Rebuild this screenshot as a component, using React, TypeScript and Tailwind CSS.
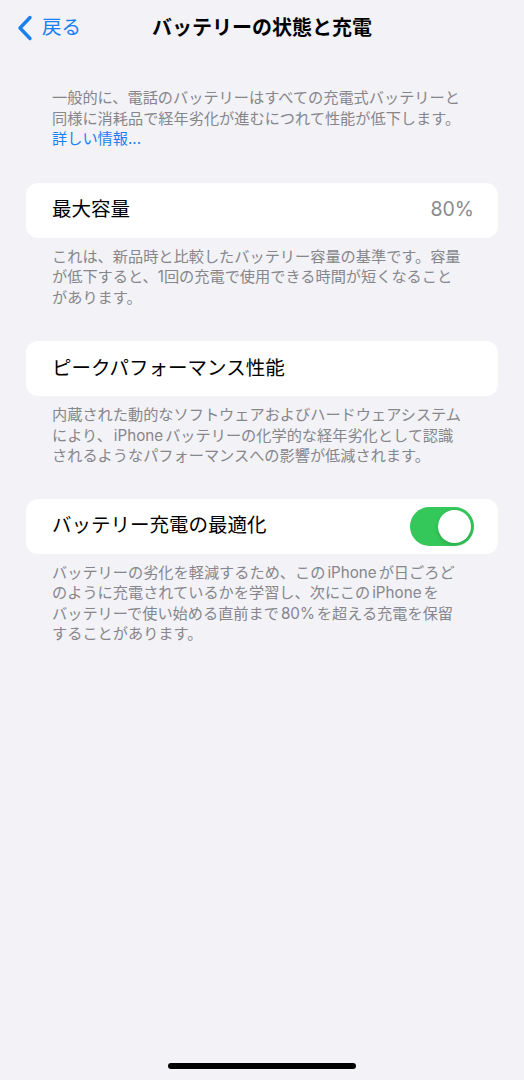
import React from 'react';

const font = { fontFamily: 'Inter, "Noto Sans CJK JP", "Noto Sans", sans-serif' };

function Footer({ children }: { children: React.ReactNode }) {
  return (
    <p className="mt-[9px] px-[26px] text-[15.2px] leading-[20.5px] text-[#86868b] whitespace-nowrap">
      {children}
    </p>
  );
}

function Card({ children }: { children: React.ReactNode }) {
  return (
    <div className="flex h-[55px] items-center justify-between rounded-[12px] bg-white pl-[26px] pr-[24px]">
      {children}
    </div>
  );
}

function Toggle() {
  return (
    <div className="flex h-[39px] w-[64px] items-center justify-end rounded-full bg-[#34c759] p-[3px]">
      <div className="h-[33px] w-[33px] rounded-full bg-white shadow-[0_2px_4px_rgba(0,0,0,0.15)]" />
    </div>
  );
}

// 和文の中の英数字には少しだけ間をあける
function L({ children }: { children: React.ReactNode }) {
  return <span className="mx-[2px]">{children}</span>;
}

export default function App() {
  return (
    <div className="flex min-h-[1080px] flex-col bg-[#f2f2f7] text-black" style={font}>
      <div className="grid h-[56px] grid-cols-[1fr_auto_1fr] items-center">
        <div className="flex items-center pl-[17px] text-[#1a7ff2]">
          <svg width="16" height="26" viewBox="0 0 16 26" fill="none">
            <path d="M13 2.5L3 13l10 10.5" stroke="currentColor" strokeWidth="3.4" strokeLinecap="round" strokeLinejoin="round" />
          </svg>
          <span className="ml-[9px] text-[19.5px]">戻る</span>
        </div>
        <h1 className="text-[20px] font-bold">バッテリーの状態と充電</h1>
        <div />
      </div>

      <div className="mx-[26px]">
        <p className="mt-[32px] px-[26px] text-[15.2px] leading-[20.5px] text-[#86868b] whitespace-nowrap">
          一般的に、電話のバッテリーはすべての充電式バッテリーと
          <br />
          同様に消耗品で経年劣化が進むにつれて性能が低下します。
          <br />
          <span className="text-[#1a7ff2]">詳しい情報...</span>
        </p>

        <div className="mt-[33px]">
          <Card>
            <span className="text-[19.5px]">最大容量</span>
            <span className="text-[19.5px] text-[#8a8a8e]">80%</span>
          </Card>
          <Footer>
            これは、新品時と比較したバッテリー容量の基準です。容量
            <br />
            が低下すると、1回の充電で使用できる時間が短くなること
            <br />
            があります。
          </Footer>
        </div>

        <div className="mt-[33px]">
          <Card>
            <span className="text-[19.5px]">ピークパフォーマンス性能</span>
          </Card>
          <Footer>
            内蔵された動的なソフトウェアおよびハードウェアシステム
            <br />
            により、<L>iPhone</L>バッテリーの化学的な経年劣化として認識
            <br />
            されるようなパフォーマンスへの影響が低減されます。
          </Footer>
        </div>

        <div className="mt-[32px]">
          <Card>
            <span className="text-[19.5px]">バッテリー充電の最適化</span>
            <Toggle />
          </Card>
          <Footer>
            バッテリーの劣化を軽減するため、この<L>iPhone</L>が日ごろど
            <br />
            のように充電されているかを学習し、次にこの<L>iPhone</L>を
            <br />
            バッテリーで使い始める直前まで<L>80%</L>を超える充電を保留
            <br />
            することがあります。
          </Footer>
        </div>
      </div>

      <div className="mt-auto flex justify-center pb-[11px]">
        <div className="h-[6px] w-[188px] rounded-full bg-black" />
      </div>
    </div>
  );
}
